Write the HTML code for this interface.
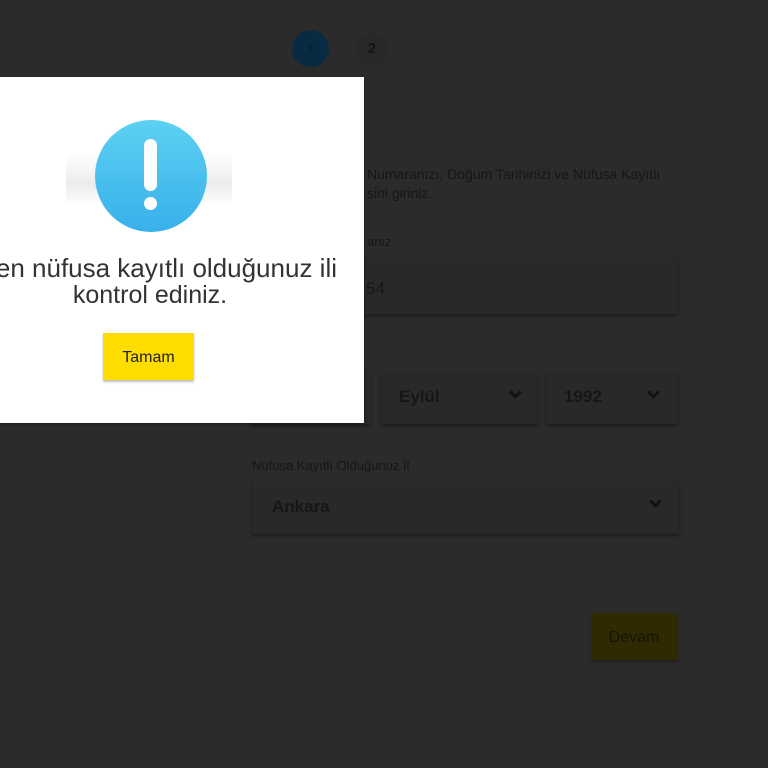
<!DOCTYPE html>
<html><head><meta charset="utf-8"><style>
*{margin:0;padding:0;box-sizing:border-box}
body{width:768px;height:768px;overflow:hidden;background:#2b2b2b;font-family:"Liberation Sans",sans-serif;position:relative}
.a{position:absolute}
.dim{color:#161616}
.field{position:absolute;background:#292929;box-shadow:0 2px 3px rgba(0,0,0,.35)}
.chev{position:absolute;width:9px;height:9px;border-right:3px solid #121212;border-bottom:3px solid #121212;transform:rotate(45deg)}
</style></head><body>
<div class="a" style="left:292px;top:30px;width:37px;height:37px;border-radius:50%;background:#082a42;color:#061e2e;font-size:13px;text-align:center;line-height:37px">1</div>
<div class="a" style="left:356px;top:33px;width:32px;height:32px;border-radius:50%;background:#282828;color:#141414;font-size:15px;text-align:center;line-height:32px;font-weight:bold">2</div>
<div class="a" style="left:370px;top:108px;width:308px;height:1px;background:#272727"></div>
<div class="a dim" style="left:367px;top:164px;font-size:14px;line-height:21px;width:320px">Numaranızı, Doğum Tarihinizi ve Nüfusa Kayıtlı</div>
<div class="a dim" style="left:367px;top:185px;font-size:14px">sini giriniz.</div>
<div class="a dim" style="left:367px;top:234px;font-size:13px">anız</div>
<div class="field" style="left:250px;top:257px;width:428px;height:57px"></div>
<div class="a dim" style="left:366px;top:279px;font-size:17px">54</div>
<div class="field" style="left:250px;top:372px;width:120px;height:52px"></div>
<div class="field" style="left:381px;top:372px;width:157px;height:52px"></div>
<div class="a dim" style="left:399px;top:387px;font-size:17px;font-weight:bold">Eylül</div>
<div class="chev" style="left:511px;top:388px"></div>
<div class="field" style="left:546px;top:372px;width:132px;height:52px"></div>
<div class="a dim" style="left:564px;top:387px;font-size:17px;font-weight:bold">1992</div>
<div class="chev" style="left:649px;top:388px"></div>
<div class="a dim" style="left:252px;top:458px;font-size:13px">Nüfusa Kayıtlı Olduğunuz İl</div>
<div class="field" style="left:252px;top:481px;width:427px;height:53px"></div>
<div class="a dim" style="left:272px;top:497px;font-size:17px;font-weight:bold">Ankara</div>
<div class="chev" style="left:651px;top:497px"></div>
<div class="a" style="left:0;top:578px;width:676px;height:1px;background:#272727"></div>
<div class="a" style="left:591px;top:613px;width:86px;height:47px;background:#302a03;box-shadow:0 2px 3px rgba(0,0,0,.3);color:#151305;font-size:16px;text-align:center;line-height:50px">Devam</div>

<div class="a" style="left:0;top:77px;width:364px;height:346px;background:#fff;box-shadow:0 1px 3px rgba(0,0,0,.4)">
  <div class="a" style="left:66px;top:75px;width:166px;height:54px;background:linear-gradient(#fff,#ececec 60%,#fff)"></div>
  <div class="a" style="left:95px;top:43px;width:112px;height:112px;border-radius:50%;background:linear-gradient(#5dd0f2,#38b0ea)"></div>
  <div class="a" style="left:144px;top:62px;width:13px;height:52px;border-radius:7px;background:#fff"></div>
  <div class="a" style="left:144px;top:120px;width:13px;height:13px;border-radius:50%;background:#fff"></div>
  <div class="a" style="right:27px;top:178px;font-size:26px;line-height:27px;color:#333;white-space:nowrap">fen nüfusa kayıtlı olduğunuz ili</div>
  <div class="a" style="left:-80px;top:205px;width:460px;text-align:center;font-size:25px;line-height:27px;color:#333;white-space:nowrap">kontrol ediniz.</div>
  <div class="a" style="left:103px;top:256px;width:91px;height:47px;background:#ffdd00;box-shadow:0 2px 2px rgba(0,0,0,.25);text-align:center;line-height:50px;font-size:16px;color:#222">Tamam</div>
</div>
</body></html>
